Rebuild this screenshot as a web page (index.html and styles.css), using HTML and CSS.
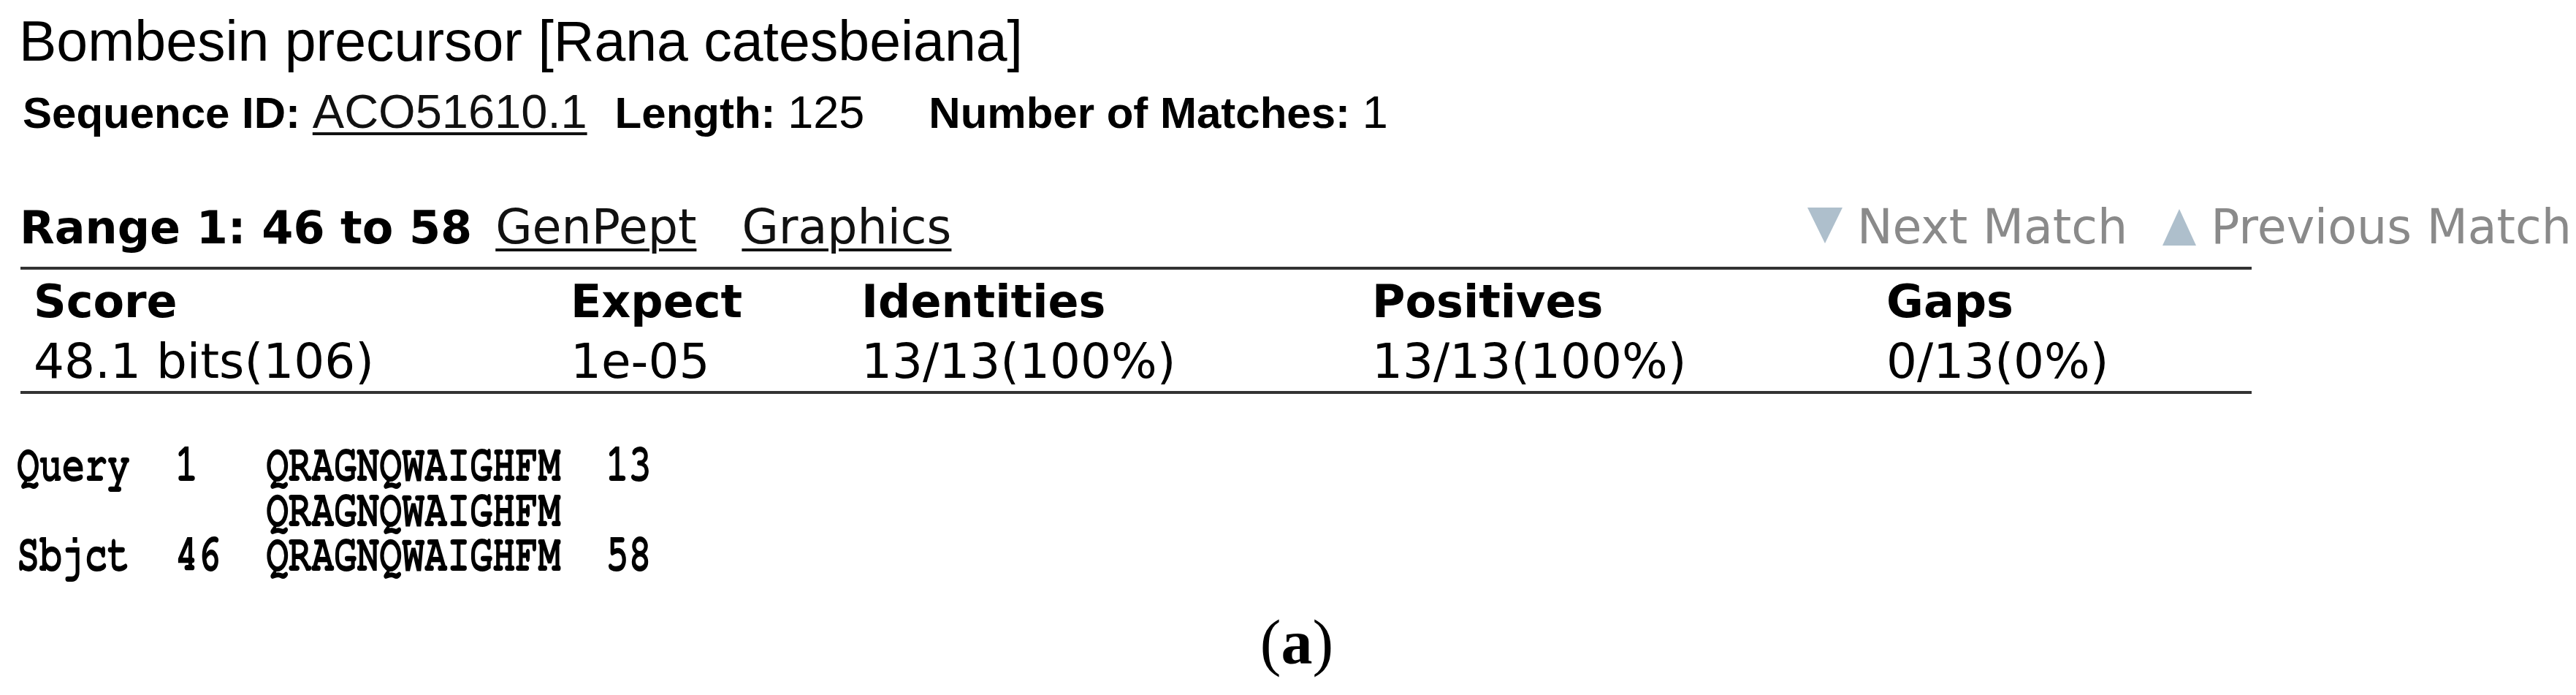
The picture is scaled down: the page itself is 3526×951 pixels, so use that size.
FILE: index.html
```html
<!DOCTYPE html>
<html lang="en">
<head>
<meta charset="utf-8">
<title>Bombesin precursor</title>
<link rel="stylesheet" href="styles.css">
</head>
<body>
<div class="page">
  <h1 class="title">Bombesin precursor [Rana catesbeiana]</h1>
  <div class="seqinfo"><span class="lbl">Sequence ID:</span> <a class="link" href="#">ACO51610.1</a><span class="lbl item-len">Length:</span> <span class="val">125</span><span class="lbl item-num">Number of Matches:</span> <span class="val">1</span></div>
  <div class="range">
    <div class="range-left">
      <span class="range-title">Range 1: 46 to 58</span>
      <a class="rlink rlink-gp" href="#">GenPept</a>
      <a class="rlink rlink-gr" href="#">Graphics</a>
    </div>
    <div class="nav">
      <span class="navitem"><svg class="tri tri-down" width="48" height="49" viewBox="0 0 48 49"><polygon points="0,0 48,0 24,49"/></svg><span class="navtext">Next Match</span></span>
      <span class="navitem navitem-prev"><svg class="tri tri-up" width="46" height="50" viewBox="0 0 46 50"><polygon points="23,0 46,50 0,50"/></svg><span class="navtext">Previous Match</span></span>
    </div>
  </div>
  <div class="stats">
    <div class="th">Score</div>
    <div class="th">Expect</div>
    <div class="th">Identities</div>
    <div class="th">Positives</div>
    <div class="th">Gaps</div>
    <div class="td">48.1 bits(106)</div>
    <div class="td">1e-05</div>
    <div class="td">13/13(100%)</div>
    <div class="td">13/13(100%)</div>
    <div class="td">0/13(0%)</div>
  </div>
  <pre class="aln">Query  1   QRAGNQWAIGHFM  13
           QRAGNQWAIGHFM
Sbjct  46  QRAGNQWAIGHFM  58</pre>
  <div class="caption">(<b>a</b>)</div>
</div>
</body>
</html>
```

FILE: styles.css
```css
html, body {
  margin: 0;
  padding: 0;
  background: #ffffff;
}

body {
  width: 3526px;
  height: 951px;
  overflow: hidden;
  color: #000000;
}

.page {
  padding-top: 18px;
}

.title {
  margin: 0 0 0 26px;
  height: 77px;
  font: 400 77px/77px "Liberation Sans", Arial, sans-serif;
  white-space: nowrap;
}

.seqinfo {
  margin: 28px 0 0 31px;
  height: 60px;
  font: 400 60px/60px "Liberation Sans", Arial, sans-serif;
  white-space: nowrap;
}

.lbl {
  font-weight: 700;
}

.val {
  font-size: 63px;
}

.link {
  color: #111111;
  font-size: 65px;
  text-decoration: underline;
  text-decoration-thickness: 4px;
  text-underline-offset: 6px;
}

.item-len {
  margin-left: 38px;
}

.item-num {
  margin-left: 88px;
}

.range {
  display: flex;
  justify-content: space-between;
  align-items: baseline;
  margin: 97px 6px 0 27px;
  height: 62px;
  font-family: "DejaVu Sans", Verdana, sans-serif;
  white-space: nowrap;
}

.range-left {
  display: flex;
  align-items: baseline;
}

.range-title {
  font: 700 62px/62px "DejaVu Sans", Verdana, sans-serif;
}

.rlink {
  color: #111111;
  font: 400 65px/62px "DejaVu Sans", Verdana, sans-serif;
  text-decoration: underline;
  text-decoration-thickness: 4px;
  text-underline-offset: 7px;
}

.rlink-gp {
  margin-left: 32px;
}

.rlink-gr {
  margin-left: 62px;
}

.nav {
  display: flex;
  align-items: baseline;
  font: 400 65px/62px "DejaVu Sans", Verdana, sans-serif;
  color: #8a8a8a;
}

.navitem-prev {
  margin-left: 48px;
}

.tri {
  fill: #aebfcc;
  margin-right: 20px;
}

.tri-down {
  vertical-align: 0;
}

.tri-up {
  vertical-align: -3px;
}

.stats {
  box-sizing: border-box;
  width: 3054px;
  margin: 23px 0 0 28px;
  padding: 13px 0 8px 18px;
  border-top: 4px solid #333333;
  border-bottom: 4px solid #333333;
  display: grid;
  grid-template-columns: 735px 398px 699px 704px 1fr;
  row-gap: 19px;
  font-family: "DejaVu Sans", Verdana, sans-serif;
  white-space: nowrap;
}

.th {
  font: 700 62px/62px "DejaVu Sans", Verdana, sans-serif;
}

.td {
  font: 400 66px/64px "DejaVu Sans", Verdana, sans-serif;
}

.aln {
  margin: 67px 0 0 23px;
  height: 184.5px;
  font: 700 72px/61.5px "Nimbus Mono PS", "Nimbus Mono L", "FreeMono", "Liberation Mono", "Courier New", monospace;
  transform: scaleX(0.718);
  transform-origin: 0 0;
  white-space: pre;
}

.caption {
  margin-top: 45.5px;
  padding-left: 24px;
  text-align: center;
  font: 400 86px/86px "Liberation Serif", "Times New Roman", serif;
}

.caption b {
  font-weight: 700;
}
```
